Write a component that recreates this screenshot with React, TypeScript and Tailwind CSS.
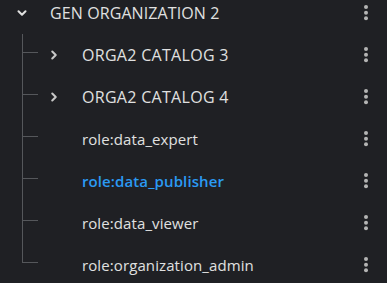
import { ChevronDown, ChevronRight } from "lucide-react";

type Child = {
  label: string;
  expandable?: boolean;
  active?: boolean;
};

const children: Child[] = [
  { label: "ORGA2 CATALOG 3", expandable: true },
  { label: "ORGA2 CATALOG 4", expandable: true },
  { label: "role:data_expert" },
  { label: "role:data_publisher", active: true },
  { label: "role:data_viewer" },
  { label: "role:organization_admin" },
];

function Kebab() {
  return (
    <button className="flex h-full w-[24px] items-center justify-center" aria-label="Actions">
      <svg width="4" height="16" viewBox="0 0 4 16" fill="#b4b4b4">
        <circle cx="2" cy="2" r="2" />
        <circle cx="2" cy="7.7" r="2" />
        <circle cx="2" cy="13.3" r="2" />
      </svg>
    </button>
  );
}

export default function App() {
  return (
    <div
      className="h-[283px] w-[387px] overflow-hidden bg-[#1f2024] text-[#e0e0e0]"
      style={{ fontFamily: '"Open Sans", "Liberation Sans", sans-serif' }}
    >
      <div className="-mt-[8px]">
        {/* root node */}
        <div className="flex h-[42px] items-center pr-[9px]">
          <div className="flex w-[44px] justify-center">
            <ChevronDown className="h-[14px] w-[14px] text-[#e0e0e0]" strokeWidth={3.5} />
          </div>
          <span className="ml-[6px] flex-1 text-[16px] tracking-[0.1px]">GEN ORGANIZATION 2</span>
          <Kebab />
        </div>

        {/* children */}
        {children.map((c, i) => {
          const last = i === children.length - 1;
          const caps = c.label === c.label.toUpperCase();
          return (
            <div key={c.label} className="flex h-[42px] items-center pr-[9px]">
              <div className="relative h-full w-[38px] shrink-0">
                <div
                  className={
                    "absolute left-[22px] top-0 w-px bg-[#55575b] " + (last ? "h-[19px]" : "h-full")
                  }
                />
                <div className="absolute left-[22px] top-[18px] h-px w-[16px] bg-[#55575b]" />
              </div>
              <div className="flex w-[32px] shrink-0 justify-center">
                {c.expandable && (
                  <ChevronRight className="h-[14px] w-[14px] text-[#c8c8c8]" strokeWidth={3.5} />
                )}
              </div>
              <span
                className={
                  "ml-[12px] flex-1 " +
                  (caps ? "text-[16px] tracking-[0.3px] " : "text-[15px] tracking-[0.1px] ") +
                  (c.active ? "font-semibold text-[#2b9af3]" : "text-[#e0e0e0]")
                }
              >
                {c.label}
              </span>
              <Kebab />
            </div>
          );
        })}
      </div>
    </div>
  );
}
